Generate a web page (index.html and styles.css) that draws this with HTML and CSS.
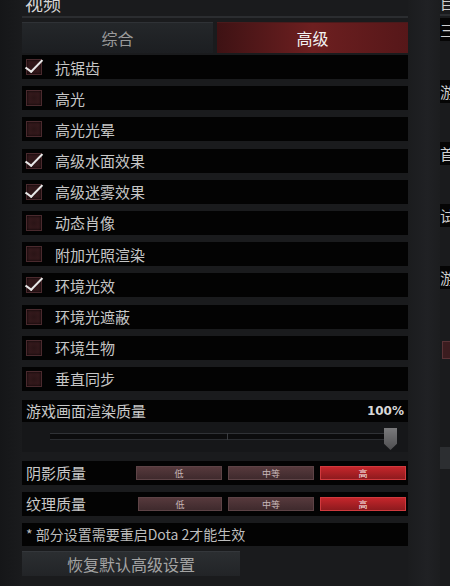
FILE: index.html
```html
<!DOCTYPE html>
<html lang="zh-CN">
<head>
  <meta charset="UTF-8">
  <title>视频 - 高级</title>
  <link rel="stylesheet" href="styles.css">
</head>
<body>
  <div class="screen">
    <div class="video-panel">
      <h1 class="panel-title">视频</h1>

      <div class="tabs">
        <div class="tab">综合</div>
        <div class="tab active">高级</div>
      </div>

      <div class="options">
        <div class="option"><span class="check on"></span>抗锯齿</div>
        <div class="option"><span class="check"></span>高光</div>
        <div class="option"><span class="check"></span>高光光晕</div>
        <div class="option"><span class="check on"></span>高级水面效果</div>
        <div class="option"><span class="check on"></span>高级迷雾效果</div>
        <div class="option"><span class="check"></span>动态肖像</div>
        <div class="option"><span class="check"></span>附加光照渲染</div>
        <div class="option"><span class="check on"></span>环境光效</div>
        <div class="option"><span class="check"></span>环境光遮蔽</div>
        <div class="option"><span class="check"></span>环境生物</div>
        <div class="option"><span class="check"></span>垂直同步</div>
      </div>

      <div class="slider-label">
        <span>游戏画面渲染质量</span>
        <span class="percent">100%</span>
      </div>
      <div class="slider">
        <div class="track"><span class="tick"></span></div>
        <div class="thumb"></div>
      </div>

      <div class="quality">
        <span class="quality-name">阴影质量</span>
        <div class="levels">
          <span class="level">低</span>
          <span class="level">中等</span>
          <span class="level selected">高</span>
        </div>
      </div>
      <div class="quality">
        <span class="quality-name">纹理质量</span>
        <div class="levels shifted">
          <span class="level">低</span>
          <span class="level">中等</span>
          <span class="level selected">高</span>
        </div>
      </div>

      <div class="note">* 部分设置需要重启Dota 2才能生效</div>
      <button class="restore-btn">恢复默认高级设置</button>
    </div>

    <div class="divider"></div>

    <div class="side-panel">
      <div class="side-title">目</div>
      <div class="side-item first">三</div>
      <div class="side-item">游</div>
      <div class="side-item">首</div>
      <div class="side-item">试</div>
      <div class="side-item">游</div>
      <span class="side-check"></span>
      <div class="side-btn"></div>
    </div>
  </div>
</body>
</html>
```

FILE: styles.css
```css
body {
  margin: 0;
  background-color: #1a1b1d;
  color: #c8c8c8;
  font-family: "Noto Sans CJK SC", "Noto Sans", sans-serif;
  overflow: hidden;
}

.screen {
  display: flex;
  height: 586px;
  overflow: hidden;
  background: linear-gradient(to right, #151618 0, #1a1b1d 22px);
}

/* left panel */
.video-panel {
  flex-shrink: 0;
  width: 386px;
  margin-left: 22px;
  display: flex;
  flex-direction: column;
}

.panel-title {
  margin: -8px 0 0;
  padding-left: 3px;
  height: 24px;
  font-size: 18px;
  font-weight: normal;
  line-height: 23px;
  color: #d6d6d6;
  border-bottom: 2px solid #2b2d30;
}

.tabs {
  display: flex;
  gap: 4px;
  margin-top: 4px;
}

.tab {
  flex: 1;
  height: 31px;
  line-height: 30px;
  text-align: center;
  font-size: 16px;
  color: #9a9a9a;
  background: linear-gradient(#24272a, #1c1e21);
  border-top: 1px solid #2f3236;
  box-sizing: border-box;
}

.tab.active {
  color: #f2f2f2;
  background: linear-gradient(to right, #3e1214, #6d1f20 50%, #561719);
  border-top-color: #4a1a1b;
}

.options {
  display: flex;
  flex-direction: column;
  gap: 7.2px;
  margin-top: 2px;
}

.option {
  height: 24px;
  display: flex;
  align-items: center;
  background-color: #030303;
  font-size: 15px;
  color: #c6c6c6;
}

.check {
  position: relative;
  width: 14px;
  height: 14px;
  margin: 0 13px 0 4px;
  background: radial-gradient(#2a1416, #3b1c1f);
  border: 1px solid #4a2a2e;
  box-shadow: inset 0 0 3px #000;
}

.check.on::after {
  content: "";
  position: absolute;
  left: 3px;
  top: -4px;
  width: 6px;
  height: 15px;
  border-right: 2px solid #e8e8e8;
  border-bottom: 2px solid #e8e8e8;
  transform: rotate(36deg) skewX(-8deg);
}

.slider-label {
  display: flex;
  justify-content: space-between;
  align-items: center;
  height: 22px;
  margin-top: 9px;
  padding: 0 4px;
  background-color: #030303;
  font-size: 15px;
}

.percent {
  font-family: "DejaVu Sans", sans-serif;
  font-size: 12px;
  font-weight: bold;
  color: #d8d8d8;
}

.slider {
  position: relative;
  height: 30px;
  background-color: #161719;
}

.track {
  position: absolute;
  left: 28px;
  right: 18px;
  top: 11px;
  height: 5px;
  background-color: #0c0c0d;
  border-top: 1px solid #303236;
  border-bottom: 1px solid #2a2c30;
}

.tick {
  position: absolute;
  left: 177px;
  top: -1px;
  width: 1px;
  height: 7px;
  background-color: #3a3c40;
}

.thumb {
  position: absolute;
  left: 362px;
  top: 6px;
  width: 13px;
  height: 22px;
  background: linear-gradient(#7a7a7c, #4e4e50);
  clip-path: polygon(0 0, 100% 0, 100% 72%, 50% 100%, 0 72%);
}

.quality {
  display: flex;
  align-items: center;
  height: 24px;
  margin-top: 9px;
  padding-left: 4px;
  background-color: #030303;
  font-size: 15px;
}

.quality + .quality {
  margin-top: 7px;
}

.quality-name {
  width: 110px;
}

.levels {
  display: flex;
  gap: 6px;
}

.levels.shifted {
  margin-left: 2px;
}

.level {
  width: 86px;
  height: 14px;
  line-height: 14px;
  text-align: center;
  font-size: 9px;
  color: #c9b9ba;
  background: linear-gradient(#56393c, #3f2a2d);
  border: 1px solid #5d4346;
  box-sizing: border-box;
}

.levels.shifted .level:first-child {
  width: 84px;
}

.level.selected {
  color: #f3e6e6;
  background: linear-gradient(#c4262b, #8e1a1e);
  border-color: #d03a3e;
}

.note {
  height: 23px;
  line-height: 23px;
  margin-top: 7px;
  padding-left: 4px;
  background-color: #030303;
  font-size: 14px;
  color: #bdbdbd;
}

.restore-btn {
  width: 218px;
  height: 25px;
  margin-top: 5px;
  padding: 0;
  border: none;
  border-top: 1px solid #34373b;
  background: linear-gradient(#2b2e31, #222427);
  font-family: inherit;
  font-size: 16px;
  color: #a4a4a4;
  cursor: pointer;
}

/* separator between panels */
.divider {
  flex-shrink: 0;
  width: 32px;
  background: linear-gradient(to right, #1b1c1e, #202124 60%, #1c1d1f);
}

/* right panel, mostly off-screen */
.side-panel {
  flex-shrink: 0;
  position: relative;
  width: 200px;
  display: flex;
  flex-direction: column;
  font-size: 15px;
  color: #cfcfcf;
}

.side-title {
  margin-top: -8px;
  height: 22px;
  line-height: 22px;
  border-bottom: 2px solid #2b2d30;
}

.side-item {
  height: 23px;
  line-height: 23px;
  margin-top: 39px;
  background-color: #050505;
}

.side-item.first {
  margin-top: 2px;
}

.side-check {
  position: absolute;
  left: 2px;
  top: 341px;
  width: 15px;
  height: 16px;
  background: #3b1c1f;
  border: 1px solid #5a3236;
}

.side-btn {
  position: absolute;
  left: 0;
  top: 447px;
  width: 120px;
  height: 22px;
  background: #2c2e31;
}
```
